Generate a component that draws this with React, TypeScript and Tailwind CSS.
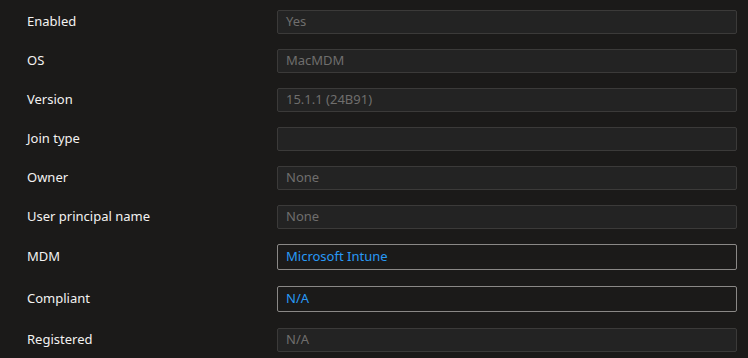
type Field = { label: string; value: string; enabled?: boolean };

const fields: Field[] = [
  { label: "Enabled", value: "Yes" },
  { label: "OS", value: "MacMDM" },
  { label: "Version", value: "15.1.1 (24B91)" },
  { label: "Join type", value: "" },
  { label: "Owner", value: "None" },
  { label: "User principal name", value: "None" },
  { label: "MDM", value: "Microsoft Intune", enabled: true },
  { label: "Compliant", value: "N/A", enabled: true },
  { label: "Registered", value: "N/A" },
];

function FieldRow({ label, value, enabled }: Field) {
  return (
    <div className={`flex items-center ${enabled ? "mb-4" : "mb-[15px]"}`}>
      <div className="w-[277px] shrink-0 pl-[27px] text-[13px] text-[#f3f2f1]">{label}</div>
      <div
        className={
          enabled
            ? "flex h-[26px] w-[460px] items-center rounded-[2px] border border-[#8a8886] bg-[#1b1a19] px-2 text-[13px] text-[#2899f5]"
            : "flex h-6 w-[460px] items-center rounded-[2px] border border-[#3b3a39] bg-[#232323] px-2 text-[13px] text-[#6f6e6d]"
        }
      >
        {value}
      </div>
    </div>
  );
}

export default function App() {
  return (
    <div className="h-[358px] w-[748px] overflow-hidden bg-[#1b1a19] pt-[10px] font-['Segoe_UI','Noto_Sans',sans-serif]">
      {fields.map((f) => (
        <FieldRow key={f.label} {...f} />
      ))}
    </div>
  );
}
